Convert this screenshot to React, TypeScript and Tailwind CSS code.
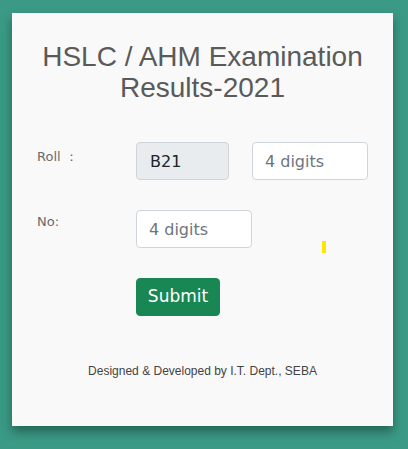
export default function App() {
  return (
    <div className="min-h-[449px] w-full bg-[#3a9a85] pt-[13px] pl-[12px]">
      <div className="relative h-[413px] w-[381px] bg-[#f9f9f9] px-[25px] pt-[28px] shadow-[0_6px_10px_rgba(0,0,0,0.35)]">
        <h1 className="text-center font-['Liberation_Sans',Arial,sans-serif] text-[28px] leading-[31px] text-[#5a5a5a]">
          HSLC / AHM Examination
          <br />
          Results-2021
        </h1>

        <form className="mt-[39px] flex flex-col font-['DejaVu_Sans',Verdana,sans-serif]" onSubmit={e => e.preventDefault()}>
          {/* Roll row */}
          <div className="flex">
            <label className="w-[99px] pt-[5px] text-[13px] leading-[19.5px] text-[#6a6a6a]">Roll ：</label>
            <input
              type="text"
              value="B21"
              readOnly
              className="h-[38px] w-[93px] rounded-[4px] border border-[#ced4da] bg-[#e9ecef] px-[13px] text-[16px] text-[#212529] outline-none"
            />
            <input
              type="text"
              placeholder="4 digits"
              className="ml-[23px] h-[38px] w-[116px] rounded-[4px] border border-[#ced4da] bg-white px-[12px] text-[16px] text-[#212529] outline-none placeholder:text-[#6c757d]"
            />
          </div>

          {/* No row */}
          <div className="mt-[30px] flex">
            <label className="w-[99px] pt-[2px] text-[13px] leading-[19.5px] text-[#6a6a6a]">No:</label>
            <input
              type="text"
              placeholder="4 digits"
              className="h-[38px] w-[116px] rounded-[4px] border border-[#ced4da] bg-white px-[12px] text-[16px] text-[#212529] outline-none placeholder:text-[#6c757d]"
            />
          </div>

          <div className="mt-[30px] flex pl-[99px]">
            <button
              type="submit"
              className="h-[38px] w-[84px] rounded-[4px] border border-[#198754] bg-[#198754] text-[17px] text-white"
            >
              Submit
            </button>
          </div>
        </form>

        <p className="mt-[48px] text-center font-['Liberation_Sans',Arial,sans-serif] text-[12px] leading-[14px] text-[#444]">
          Designed &amp; Developed by I.T. Dept., SEBA
        </p>

        <span className="absolute left-[310px] top-[228px] h-[12px] w-[4px] bg-[#ffe500]" />
      </div>
    </div>
  )
}
